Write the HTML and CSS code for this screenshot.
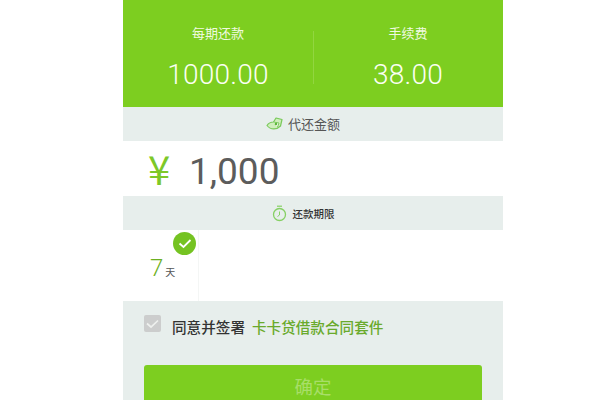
FILE: index.html
```html
<!DOCTYPE html>
<html lang="zh">
<head>
<meta charset="utf-8">
<title>代还金额</title>
<link rel="stylesheet" href="styles.css">
</head>
<body>
<main class="phone">
  <section class="summary">
    <div class="stat">
      <div class="stat-label">每期还款</div>
      <div class="stat-value">1000.00</div>
    </div>
    <div class="stat stat-right">
      <div class="stat-label">手续费</div>
      <div class="stat-value">38.00</div>
    </div>
  </section>
  <div class="band band-amount">
    <svg class="band-icon" width="17" height="14" viewBox="0 0 17 14">
      <path d="M1 8.5 C3 5.5 5 5 7.5 5 L10 1 L16 2.5 L14.5 9 C11 12.5 5 13.5 1 8.5 Z" fill="#cfeebc" stroke="#79c95a" stroke-width="1.2" stroke-linejoin="round"/>
      <path d="M7.5 5 L13 6 L11.5 10" fill="#fff" stroke="#79c95a" stroke-width="1"/>
      <circle cx="10" cy="7" r="1.3" fill="#5eb83c"/>
    </svg>
    <span class="band-text">代还金额</span>
  </div>
  <section class="amount">
    <span class="yen">¥</span>
    <span class="amount-value">1,000</span>
  </section>
  <div class="band band-term">
    <svg class="band-icon" width="15" height="17" viewBox="0 0 15 17">
      <circle cx="7.5" cy="9.5" r="6" fill="none" stroke="#86d064" stroke-width="1.3"/>
      <path d="M5 1.2 H10" stroke="#86d064" stroke-width="1.2"/>
      <path d="M7.5 6.5 V10 L5.5 11.5" fill="none" stroke="#86d064" stroke-width="1"/>
    </svg>
    <span class="band-text">还款期限</span>
  </div>
  <section class="terms">
    <div class="term">
      <span class="term-num">7</span><span class="term-unit">天</span>
      <span class="term-badge">
        <svg width="14" height="11" viewBox="0 0 14 11"><path d="M1.5 5.5 L5.5 9 L12.5 2" fill="none" stroke="#fff" stroke-width="1.8"/></svg>
      </span>
    </div>
  </section>
  <section class="agree">
    <span class="checkbox">
      <svg width="13" height="10" viewBox="0 0 13 10"><path d="M1 4.5 L5 8 L12 1.5" fill="none" stroke="#eef0ee" stroke-width="1.7"/></svg>
    </span>
    <span class="agree-text">同意并签署</span>
    <span class="agree-link">卡卡贷借款合同套件</span>
  </section>
  <div class="submit">确定</div>
</main>
</body>
</html>
```
FILE: styles.css
```css
html, body {
  margin: 0;
  padding: 0;
  height: 400px;
  overflow: hidden;
  background: #fff;
}
.phone {
  width: 380px;
  height: 400px;
  margin-left: 123px;
  background: #e7eeec;
  overflow: hidden;
  font-family: "Noto Sans CJK SC", "Roboto", sans-serif;
}
.summary {
  display: flex;
  height: 107px;
  background: #7dce20;
  color: #f0fae0;
}
.stat {
  flex: 1;
  display: flex;
  flex-direction: column;
  align-items: center;
  padding-top: 23px;
  box-sizing: border-box;
}
.stat-right {
  position: relative;
}
.stat-right::before {
  content: "";
  position: absolute;
  left: 0;
  top: 31px;
  height: 53px;
  width: 1px;
  background: #92d640;
}
.stat-label {
  font-size: 13px;
  line-height: 19px;
}
.stat-value {
  font-family: Roboto, sans-serif;
  font-weight: 300;
  font-size: 28px;
  line-height: 30px;
  margin-top: 18px;
  letter-spacing: 0.2px;
  color: #fbfff2;
}
.band {
  display: flex;
  align-items: center;
  justify-content: center;
  gap: 5px;
  height: 34px;
  padding-right: 20px;
  font-size: 13px;
  color: #555;
}
.band-amount .band-text {
  margin-top: -2px;
}
.band-term {
  color: #333;
  font-size: 10.5px;
  font-weight: 500;
  gap: 6px;
}
.amount {
  display: flex;
  align-items: center;
  height: 55px;
  background: #fff;
  padding-left: 25px;
}
.yen {
  font-family: "Noto Sans CJK SC", sans-serif;
  font-size: 40px;
  line-height: 55px;
  color: #7dc828;
  width: 41px;
}
.amount-value {
  font-family: Roboto, sans-serif;
  font-size: 37px;
  line-height: 55px;
  position: relative;
  top: 3px;
  color: #5c5c5c;
}
.terms {
  height: 71px;
  background: #fff;
}
.term {
  position: relative;
  width: 76px;
  height: 71px;
  box-sizing: border-box;
  border-right: 1px solid #f4f6f5;
  padding: 23px 0 0 27px;
  line-height: 30px;
}
.term-num {
  font-family: Roboto, sans-serif;
  font-size: 24px;
  font-weight: 300;
  color: #6cb022;
}
.term-unit {
  font-size: 10px;
  color: #555;
  margin-left: 2px;
}
.term-badge {
  position: absolute;
  top: 2px;
  left: 50px;
  width: 23px;
  height: 23px;
  border-radius: 50%;
  background: #75c322;
  display: flex;
  align-items: center;
  justify-content: center;
}
.agree {
  display: flex;
  align-items: center;
  height: 50px;
  padding: 0 0 0 21px;
}
.checkbox {
  width: 17px;
  height: 17px;
  border-radius: 2px;
  background: #cccdcd;
  display: flex;
  align-items: center;
  justify-content: center;
  margin-right: 11px;
  margin-top: -5px;
}
.agree-text {
  font-size: 14.6px;
  font-weight: 500;
  color: #333;
  margin-right: 7px;
}
.agree-link {
  font-size: 14.6px;
  color: #6aaa2c;
  font-weight: 500;
}
.submit {
  margin: 14px 21px 0;
  height: 60px;
  padding-top: 6px;
  box-sizing: border-box;
  background: #7dce20;
  border-radius: 3px;
  color: #a8de68;
  font-size: 18.5px;
  line-height: 30px;
  text-align: center;
}
```
